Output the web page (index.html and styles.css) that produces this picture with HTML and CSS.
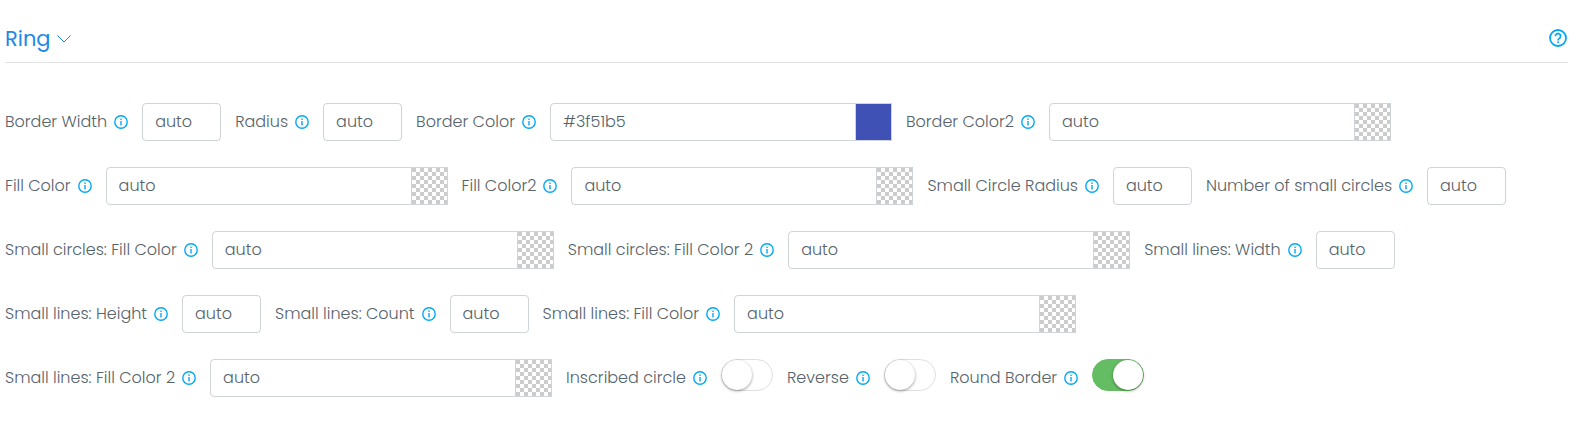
FILE: index.html
```
<!DOCTYPE html>
<html lang="en">
<head>
    <meta charset="utf-8">
    <title>Ring</title>
    <link rel="stylesheet" href="styles.css">
</head>
<body>

    <!-- Shared icons -->
    <svg class="sprite" aria-hidden="true">
        <symbol id="icon-info" viewBox="0 0 14 14">
            <circle cx="7" cy="7" r="6.2" fill="none" stroke="currentColor" stroke-width="1.4"/>
            <path d="M6.3 3.5h1.4v1.4H6.3zM6.3 6h1.4v4.5H6.3z" fill="currentColor"/>
        </symbol>
    </svg>

    <header class="section-header">
        <h4 class="section-title">
            <a href="#ring">Ring
                <svg class="chevron" viewBox="0 0 14 8"><path d="M.5.5 7 7 13.5.5" fill="none" stroke="currentColor"/></svg>
            </a>
        </h4>
        <button type="button" class="help" aria-label="Help">
            <svg viewBox="0 0 18 18" fill="none" stroke="currentColor" stroke-width="1.8">
                <circle cx="9" cy="9" r="8"/>
                <path d="M6.4 7.2a2.6 2.6 0 1 1 4.2 2C9.6 9.9 9 10.2 9 11.4M9 12.4v1.7"/>
            </svg>
        </button>
    </header>

    <form id="ring" class="options">
        <div class="field">
            <label for="borderWidth">Border Width</label>
            <svg class="info"><use href="#icon-info"/></svg>
            <input type="text" id="borderWidth" class="number" value="auto">
        </div>
        <div class="field">
            <label for="radius">Radius</label>
            <svg class="info"><use href="#icon-info"/></svg>
            <input type="text" id="radius" class="number" value="auto">
        </div>
        <div class="field">
            <label for="borderColor">Border Color</label>
            <svg class="info"><use href="#icon-info"/></svg>
            <div class="color">
                <input type="text" id="borderColor" value="#3f51b5">
                <button type="button" class="swatch indigo" aria-label="Pick border color"></button>
            </div>
        </div>
        <div class="field">
            <label for="borderColor2">Border Color2</label>
            <svg class="info"><use href="#icon-info"/></svg>
            <div class="color">
                <input type="text" id="borderColor2" value="auto">
                <button type="button" class="swatch" aria-label="Pick border color 2"></button>
            </div>
        </div>
        <div class="field">
            <label for="fillColor">Fill Color</label>
            <svg class="info"><use href="#icon-info"/></svg>
            <div class="color">
                <input type="text" id="fillColor" value="auto">
                <button type="button" class="swatch" aria-label="Pick fill color"></button>
            </div>
        </div>
        <div class="field">
            <label for="fillColor2">Fill Color2</label>
            <svg class="info"><use href="#icon-info"/></svg>
            <div class="color">
                <input type="text" id="fillColor2" value="auto">
                <button type="button" class="swatch" aria-label="Pick fill color 2"></button>
            </div>
        </div>
        <div class="field">
            <label for="smallRadius">Small Circle Radius</label>
            <svg class="info"><use href="#icon-info"/></svg>
            <input type="text" id="smallRadius" class="number" value="auto">
        </div>
        <div class="field">
            <label for="smallCount">Number of small circles</label>
            <svg class="info"><use href="#icon-info"/></svg>
            <input type="text" id="smallCount" class="number" value="auto">
        </div>
        <div class="field">
            <label for="circleFill">Small circles: Fill Color</label>
            <svg class="info"><use href="#icon-info"/></svg>
            <div class="color">
                <input type="text" id="circleFill" value="auto">
                <button type="button" class="swatch" aria-label="Pick small circles color"></button>
            </div>
        </div>
        <div class="field">
            <label for="circleFill2">Small circles: Fill Color 2</label>
            <svg class="info"><use href="#icon-info"/></svg>
            <div class="color">
                <input type="text" id="circleFill2" value="auto">
                <button type="button" class="swatch" aria-label="Pick small circles color 2"></button>
            </div>
        </div>
        <div class="field">
            <label for="lineWidth">Small lines: Width</label>
            <svg class="info"><use href="#icon-info"/></svg>
            <input type="text" id="lineWidth" class="number" value="auto">
        </div>
        <div class="field">
            <label for="lineHeight">Small lines: Height</label>
            <svg class="info"><use href="#icon-info"/></svg>
            <input type="text" id="lineHeight" class="number" value="auto">
        </div>
        <div class="field">
            <label for="lineCount">Small lines: Count</label>
            <svg class="info"><use href="#icon-info"/></svg>
            <input type="text" id="lineCount" class="number" value="auto">
        </div>
        <div class="field">
            <label for="lineFill">Small lines: Fill Color</label>
            <svg class="info"><use href="#icon-info"/></svg>
            <div class="color">
                <input type="text" id="lineFill" value="auto">
                <button type="button" class="swatch" aria-label="Pick small lines color"></button>
            </div>
        </div>
        <div class="field">
            <label for="lineFill2">Small lines: Fill Color 2</label>
            <svg class="info"><use href="#icon-info"/></svg>
            <div class="color">
                <input type="text" id="lineFill2" value="auto">
                <button type="button" class="swatch" aria-label="Pick small lines color 2"></button>
            </div>
        </div>
        <div class="field">
            <label for="inscribed">Inscribed circle</label>
            <svg class="info"><use href="#icon-info"/></svg>
            <input type="checkbox" id="inscribed" class="switch">
        </div>
        <div class="field">
            <label for="reverse">Reverse</label>
            <svg class="info"><use href="#icon-info"/></svg>
            <input type="checkbox" id="reverse" class="switch">
        </div>
        <div class="field">
            <label for="roundBorder">Round Border</label>
            <svg class="info"><use href="#icon-info"/></svg>
            <input type="checkbox" id="roundBorder" class="switch" checked>
        </div>
    </form>

</body>
</html>
```
FILE: styles.css
```
* {
    box-sizing: border-box;
}
body {
    margin: 0;
    padding: 15px 16px 24px 5px;
    background: #fff;
    color: #56636a;
    font-family: Poppins, Inter, sans-serif;
    font-size: 16px;
    font-weight: 300;
    line-height: 24px;
}
.sprite {
    position: absolute;
    width: 0;
    height: 0;
}
.section-header {
    display: flex;
    align-items: center;
    justify-content: space-between;
    height: 48px;
    border-bottom: 1px solid #e0e2e3;
    margin-bottom: 40px;
}
.section-title {
    margin: 0;
    font-size: 21px;
    font-weight: 400;
}
.section-title a {
    display: flex;
    align-items: center;
    gap: 6px;
    color: #1e88e5;
    text-decoration: none;
}
.chevron {
    width: 14px;
    height: 8px;
}
.help {
    display: flex;
    padding: 0 0 2px;
    border: none;
    background: none;
    color: #03a9f3;
    margin-right: 1px;
    cursor: pointer;
}
.help svg {
    width: 18px;
    height: 18px;
}
.options {
    display: flex;
    flex-wrap: wrap;
    gap: 26px 14px;
}
.field {
    display: flex;
    align-items: center;
    height: 38px;
    white-space: nowrap;
}
.info {
    width: 14px;
    height: 14px;
    margin: 0 14px 0 7px;
    color: #03a9f3;
}
input[type="text"] {
    height: 38px;
    padding: 0 12px 2px;
    border: 1px solid #ced4da;
    border-radius: 4px;
    background: #fff;
    color: inherit;
    font: inherit;
}
.number {
    width: 79px;
}
.color {
    display: flex;
    width: 342px;
}
.color input[type="text"] {
    flex: 1;
    min-width: 0;
    border-radius: 4px 0 0 4px;
}
.swatch {
    width: 36px;
    padding: 0;
    border: 1px solid #ced4da;
    border-left: none;
    background: repeating-conic-gradient(#fff 0 25%, #ccc 0 50%) 0 0 / 8px 8px;
    cursor: pointer;
}
.swatch.indigo {
    background: #3f51b5;
}
.switch {
    appearance: none;
    align-self: flex-start;
    width: 52px;
    height: 32px;
    margin: 0;
    border: 1px solid #dfdfdf;
    border-radius: 16px;
    background: #fff;
    cursor: pointer;
}
.switch::before {
    content: "";
    display: block;
    width: 30px;
    height: 30px;
    border-radius: 50%;
    background: #fff;
    box-shadow: 0 1px 3px rgba(0, 0, 0, 0.4);
}
.switch:checked {
    border-color: #64bd63;
    background: #64bd63;
}
.switch:checked::before {
    margin-left: 20px;
}
```
